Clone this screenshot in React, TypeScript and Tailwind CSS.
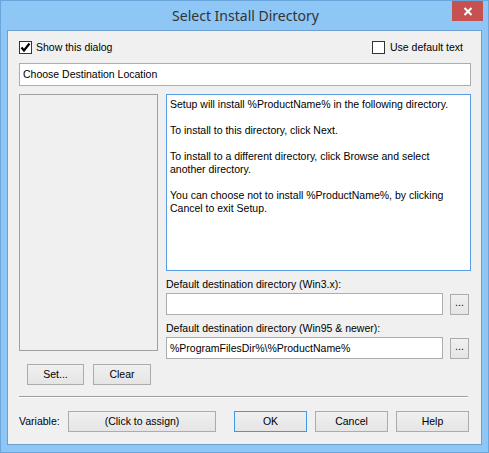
import React from "react";

const font = { fontFamily: '"Liberation Sans", Arial, sans-serif' };

function Check({ checked }: { checked?: boolean }) {
  return (
    <div className="w-[13px] h-[13px] border border-[#333333] bg-white flex items-center justify-center">
      {checked && (
        <svg width="11" height="11" viewBox="0 0 11 11">
          <path d="M1.5 5.5 L4 8.5 L9.5 1.5" fill="none" stroke="#000" strokeWidth="2.2" />
        </svg>
      )}
    </div>
  );
}

function Btn({ children, className = "", def }: { children: React.ReactNode; className?: string; def?: boolean }) {
  return (
    <div
      className={`h-[21px] flex items-center justify-center text-[10.5px] text-black bg-gradient-to-b from-[#f0f0f0] to-[#e5e5e5] border ${
        def ? "border-[#3c9ae8]" : "border-[#acacac]"
      } ${className}`}
    >
      {children}
    </div>
  );
}

export default function App() {
  return (
    <div
      className="w-[489px] h-[453px] bg-[#8ec6f6] border border-[#6aa5dc] flex flex-col"
      style={font}
    >
      <div className="h-[29px] relative flex items-center justify-center">
        <span
          className="text-[14px] text-[#333333] pl-[2px]"
          style={{ fontFamily: '"Noto Sans", "Open Sans", sans-serif' }}
        >
          Select Install Directory
        </span>
        <div className="absolute right-[5px] top-0 w-[31px] h-[20px] bg-[#c75050] flex items-center justify-center">
          <svg width="10" height="9" viewBox="0 0 10 9">
            <path d="M1.5 1 L8.5 8 M8.5 1 L1.5 8" stroke="#fff" strokeWidth="2" />
          </svg>
        </div>
      </div>
      <div className="mx-[6px] h-[415px] bg-[#f0f0f0] border border-[#6f9fcf] pt-[10px] pl-[11px] flex flex-col text-[10.5px] text-black leading-[13px]">
        <div className="flex items-center justify-between w-[444px] h-[13px]">
          <div className="flex items-center gap-[4px]">
            <Check checked />
            <span>Show this dialog</span>
          </div>
          <div className="flex items-center gap-[5px]">
            <Check />
            <span>Use default text</span>
          </div>
        </div>
        <div className="mt-[9px] w-[452px] h-[23px] bg-white border border-[#abadb3] flex items-center px-[3px]">
          Choose Destination Location
        </div>
        <div className="mt-[8px] flex gap-[8px]">
          <div className="w-[139px] flex flex-col">
            <div className="h-[257px] border border-[#a0a0a0] bg-[#f0f0f0]" />
            <div className="mt-[13px] pl-[8px] flex gap-[9px]">
              <Btn className="w-[57px]">Set...</Btn>
              <Btn className="w-[58px]">Clear</Btn>
            </div>
          </div>
          <div className="w-[305px] flex flex-col">
            <div className="h-[177px] bg-white border border-[#569de5] pt-[3px] px-[3px] flex flex-col">
              <div>Setup will install %ProductName% in the following directory.</div>
              <div className="h-[13px]" />
              <div>To install to this directory, click Next.</div>
              <div className="h-[13px]" />
              <div>To install to a different directory, click Browse and select</div>
              <div>another directory.</div>
              <div className="h-[13px]" />
              <div>You can choose not to install %ProductName%, by clicking</div>
              <div>Cancel to exit Setup.</div>
            </div>
            <div className="mt-[7px]">Default destination directory (Win3.x):</div>
            <div className="mt-[2px] flex items-center gap-[7px]">
              <div className="w-[277px] h-[22px] bg-white border border-[#abadb3]" />
              <Btn className="w-[19px] h-[20px] pb-[4px]">...</Btn>
            </div>
            <div className="mt-[7px]">Default destination directory (Win95 &amp; newer):</div>
            <div className="mt-[2px] flex items-center gap-[7px]">
              <div className="w-[277px] h-[22px] bg-white border border-[#abadb3] flex items-center px-[3px]">
                %ProgramFilesDir%\%ProductName%
              </div>
              <Btn className="w-[19px] h-[20px] pb-[4px]">...</Btn>
            </div>
          </div>
        </div>
        <div className="mt-[11px] w-[449px] border-t border-t-[#a0a0a0] border-b border-b-white" />
        <div className="mt-[13px] flex items-center">
          <span className="w-[49px]">Variable:</span>
          <Btn className="w-[148px]">(Click to assign)</Btn>
          <Btn className="w-[73px] ml-[18px]" def>
            OK
          </Btn>
          <Btn className="w-[73px] ml-[8px]">Cancel</Btn>
          <Btn className="w-[73px] ml-[8px]">Help</Btn>
        </div>
      </div>
    </div>
  );
}
